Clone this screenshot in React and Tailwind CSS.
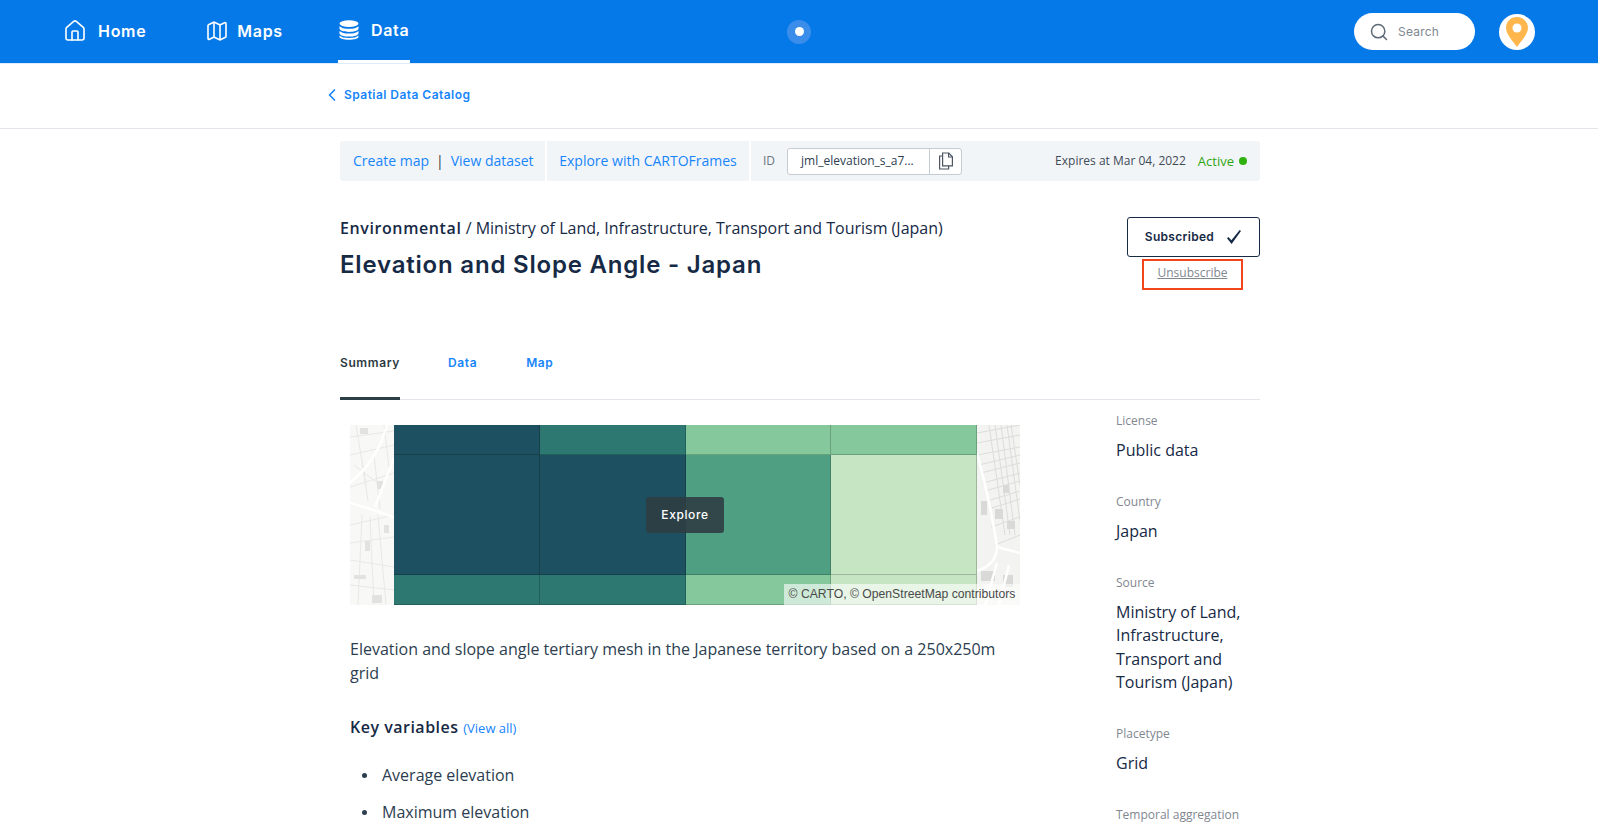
import React from 'react';
import { House, Map as MapIcon, Search, ChevronLeft } from 'lucide-react';

const heading = "font-['Inter',sans-serif]";

const DatabaseIcon = () => (
  <svg width="20" height="20" viewBox="0 0 20 20" fill="#fff">
    <ellipse cx="10" cy="3.6" rx="9.5" ry="3.4" />
    <path d="M.5 6.2c1.6 1.7 5 2.6 9.5 2.6s7.9-.9 9.5-2.6v2.3c0 1.9-4.2 3.4-9.5 3.4S.5 10.4.5 8.5z" />
    <path d="M.5 11c1.6 1.7 5 2.6 9.5 2.6s7.9-.9 9.5-2.6v2.2c0 1.9-4.2 3.4-9.5 3.4S.5 15.100.5 13.200z" />
    <path d="M.5 15.500c1.600 1.700 5 2.500 9.500 2.500s7.900-.8 9.500-2.500v1.200c0 1.800-4.200 3-9.500 3s-9.500-1.200-9.500-3z" />
  </svg>
);

const PinIcon = () => (
  <svg width="24" height="32" viewBox="0 0 24 32">
    <path d="M12 1C5.800 1 1 5.800 1 11.800c0 6.500 7 13.700 11 19.200 4-5.500 11-12.700 11-19.200C23 5.800 18.200 1 12 1z" fill="#ffb74d" />
    <circle cx="12" cy="12" r="4.500" fill="#fff" />
  </svg>
);

const CopyIcon = () => (
  <svg width="16" height="18" viewBox="0 0 16 18" fill="none" stroke="#4b5563" strokeWidth="1.200">
    <path d="M4.600 1h6.200l3.600 3.800v9H4.600z" />
    <path d="M10.600 1v4h3.800" />
    <path d="M4.600 4H1.600v13h9v-3.200" />
  </svg>
);

const CheckIcon = () => (
  <svg width="16" height="16" viewBox="0 0 16 16" fill="#162945">
    <path d="M1 9.200l1.400-1.300 3 3.300L13.700 1 15 1.900 5.600 15z" />
  </svg>
);

const StreetsLeft = () => (
  <svg width="44" height="180" viewBox="0 0 44 180" className="block shrink-0">
    <rect width="44" height="180" fill="#f8f8f6" />
    <g fill="none" stroke="#e8e8e6" strokeWidth="1">
      <path d="M0 12L44 6M0 30L44 20M6 0L16 60M0 62L44 48M12 36L18 76M24 30L30 84M0 100L44 90M0 118L44 112M12 90L8 180M0 135L44 142M28 90L36 180M0 160L44 165M34 0L40 50M20 92L24 180M4 40L30 60" />
    </g>
    <g fill="#e2e2e0">
      <rect x="10" y="3" width="8" height="6" />
      <rect x="27" y="56" width="6" height="8" />
      <rect x="34" y="100" width="5" height="8" />
      <rect x="15" y="116" width="5" height="10" />
      <rect x="4" y="150" width="12" height="4" />
      <rect x="22" y="170" width="10" height="8" />
    </g>
    <g fill="none" stroke="#fff" strokeWidth="2.500">
      <path d="M37 0C32 16 26 36 0 58" />
      <path d="M0 78L14 82L44 92" />
      <path d="M44 33L25 82" />
    </g>
  </svg>
);

const StreetsRight = () => (
  <svg width="43" height="180" viewBox="0 0 43 180" className="block shrink-0">
    <rect width="43" height="180" fill="#f3f3f1" />
    <g fill="none" stroke="#dcdcda" strokeWidth="1">
      <path d="M0 8L43 0M0 18L43 10M0 30L43 22M2 40L43 30M4 48L43 38M6 58L43 48M8 66L43 56M10 76L43 66M12 84L43 74M14 102L43 92M18 120L43 110M12 0L28 110M18 0L33 110M24 0L38 110M30 0L43 96M34 0L43 60" />
    </g>
    <g fill="#d9d9d7">
      <rect x="4" y="76" width="6" height="14" />
      <rect x="26" y="60" width="6" height="8" />
      <rect x="18" y="84" width="8" height="10" />
      <rect x="30" y="96" width="8" height="8" />
      <rect x="4" y="146" width="14" height="10" />
      <rect x="26" y="150" width="10" height="12" />
    </g>
    <g fill="none" stroke="#fff" strokeWidth="2.500">
      <path d="M0 28C6 50 14 80 20 122C20 134 12 142 0 146" />
      <path d="M20 122L43 128" />
      <path d="M20 138L8 180M32 140L22 180" />
    </g>
  </svg>
);

const mapCells = [
  'bg-[#1d5060]', 'bg-[#2e7872]', 'bg-[#85c89b]', 'bg-[#85c89b]',
  'bg-[#1d5060]', 'bg-[#1d5060]', 'bg-[#4fa083]', 'bg-[#c6e5c3]',
  'bg-[#2e7872]', 'bg-[#2e7872]', 'bg-[#85c89b]', 'bg-[#c6e5c3]',
];

const details = [
  { label: 'License', value: ['Public data'] },
  { label: 'Country', value: ['Japan'] },
  { label: 'Source', value: ['Ministry of Land,', 'Infrastructure,', 'Transport and', 'Tourism (Japan)'] },
  { label: 'Placetype', value: ['Grid'] },
];

export default function App() {
  return (
    <div className="h-screen overflow-hidden bg-white text-[#162945] font-['Open_Sans',sans-serif]">
      {/* Top bar */}
      <header className="flex h-[64px] items-stretch bg-[#0679e8] border-b border-[#dcecfb] text-white">
        <nav className={`flex flex-1 items-stretch pl-[63px] text-[16px] font-semibold tracking-[0.7px] ${heading}`}>
          <a className="flex items-center gap-[11px] mr-[59px] pb-[2px]">
            <House size={24} strokeWidth={1.600} />
            <span>Home</span>
          </a>
          <a className="flex items-center gap-[8px] mr-[55px] pb-[2px]">
            <MapIcon size={24} strokeWidth={1.600} />
            <span>Maps</span>
          </a>
          <a className="flex items-center gap-[12px] border-b-[3px] border-white px-[1px]">
            <DatabaseIcon />
            <span>Data</span>
          </a>
        </nav>
        <div className="flex items-center">
          <span className="flex h-6 w-6 items-center justify-center rounded-full bg-[#3a8eea]">
            <span className="h-[9px] w-[9px] rounded-full bg-white" />
          </span>
        </div>
        <div className="flex flex-1 items-center justify-end gap-6 pr-[63px]">
          <div className="flex h-[37px] w-[121px] items-center gap-[9px] rounded-full bg-white pl-[15px]">
            <Search size={20} strokeWidth={1.800} color="#5f6b76" />
            <span className={`text-[12px] tracking-[0.2px] text-[#7f8790] ${heading}`}>Search</span>
          </div>
          <div className="flex h-9 w-9 items-center justify-center rounded-full bg-white">
            <PinIcon />
          </div>
        </div>
      </header>

      {/* Breadcrumb */}
      <div className="flex h-[65px] items-center border-b border-[#e2e6ea] pl-[322px] pb-[2px]">
        <a className={`flex items-center gap-[2px] text-[12px] font-semibold tracking-[0.45px] text-[#1785fb] ${heading}`}>
          <ChevronLeft size={20} strokeWidth={2} />
          <span>Spatial Data Catalog</span>
        </a>
      </div>

      <main className="ml-[340px] w-[920px]">
        {/* Toolbar */}
        <div className="mt-3 flex h-10 gap-[2px] overflow-hidden rounded-[3px] text-[14px] leading-[20px]">
          <div className="flex w-[205px] items-center bg-[#f2f5f8] pl-[13px] text-[#1785fb]">
            <a>Create map</a>
            <span className="mx-[7px] text-[#2c3a42]">|</span>
            <a>View dataset</a>
          </div>
          <div className="flex w-[202px] items-center justify-center bg-[#f2f5f8] text-[#1785fb]">
            <a>Explore with CARTOFrames</a>
          </div>
          <div className="flex flex-1 items-center bg-[#f2f5f8] pl-3 pr-[13px]">
            <span className="text-[12px] text-[#6b7680]">ID</span>
            <div className="ml-[12px] flex h-[27px] w-[175px] items-center rounded-[3px] border border-[#c5ccd3] bg-white text-[12px] text-[#2c3e50]">
              <span className="flex-1 pl-[13px]">jml_elevation_s_a7...</span>
              <span className="flex h-full w-[32px] items-center justify-center border-l border-[#c5ccd3]">
                <CopyIcon />
              </span>
            </div>
            <span className="ml-auto text-[12px] text-[#3d4b57]">Expires at Mar 04, 2022</span>
            <span className="ml-[12px] text-[13px] text-[#2fa50f]">Active</span>
            <span className="ml-[5px] h-2 w-2 rounded-full bg-[#2fb20f]" />
          </div>
        </div>

        {/* Title block */}
        <div className="mt-[36px] flex h-[136px] items-start justify-between">
          <div>
            <p className="text-[16px] leading-[22px]">
              <strong className="font-semibold tracking-[0.6px]">Environmental</strong> / Ministry of Land, Infrastructure, Transport and Tourism (Japan)
            </p>
            <h1 className={`mt-[10px] text-[24px] leading-[32px] font-semibold tracking-[0.8px] ${heading}`}>
              Elevation and Slope Angle - Japan
            </h1>
          </div>
          <div className="flex w-[133px] flex-col items-center">
            <button className={`flex h-10 w-full items-center justify-center gap-[12px] rounded-[3px] border border-[#162945] text-[12px] font-semibold tracking-[0.3px] ${heading}`}>
              Subscribed
              <CheckIcon />
            </button>
            <div className="mt-[2px] mr-[2px] flex h-[31px] w-[101px] items-center justify-center border-2 border-[#f2451c] pb-[3px]">
              <a className="text-[12px] text-[#7f8790] underline">Unsubscribe</a>
            </div>
          </div>
        </div>

        {/* Tabs */}
        <div className={`flex h-[47px] border-b border-[#e2e6ea] text-[12px] font-semibold tracking-[0.6px] ${heading}`}>
          <a className="h-[43px] w-[60px] border-b-[3px] border-[#2c3e46] text-[#2c3a42] box-content -mb-[1px] pt-[1px]">Summary</a>
          <a className="ml-[48px] pt-[1px] text-[#1785fb]">Data</a>
          <a className="ml-[49px] pt-[1px] text-[#1785fb]">Map</a>
        </div>

        <div className="flex">
          {/* Left column */}
          <div className="w-[776px] pl-[10px]">
            <div className="relative mt-[25px] flex h-[180px] w-[670px]">
              <StreetsLeft />
              <div className="grid w-[583px] grid-cols-4 grid-rows-[30px_120px_30px]">
                {mapCells.map((cell, i) => (
                  <div key={i} className={`${cell} border-r border-b border-black/20`} />
                ))}
              </div>
              <StreetsRight />
              <button className={`absolute left-[296px] top-[72px] h-9 w-[78px] rounded-[3px] bg-[#2f3d42]/90 text-[12px] font-medium tracking-[0.6px] text-white ${heading}`}>
                Explore
              </button>
              <div className="absolute bottom-0 right-0 flex h-[21px] w-[236px] items-center justify-center bg-white/60 font-['Liberation_Sans',sans-serif] text-[12.200px] text-[#4a4a4a]">
                © CARTO, © OpenStreetMap contributors
              </div>
            </div>

            <p className="mt-[32px] w-[670px] text-[16px] leading-[24px] text-[#2c3e50]">
              Elevation and slope angle tertiary mesh in the Japanese territory based on a 250x250m grid
            </p>

            <h3 className="mt-[30px] text-[16px] leading-[24px] font-semibold tracking-[0.5px]">
              Key variables <a className="text-[13px] font-medium tracking-normal text-[#1785fb]">(View all)</a>
            </h3>

            <ul className="mt-[23px] pl-[12px] text-[16px] leading-[24px] text-[#2c3e50]">
              <li className="flex items-center gap-[15px]">
                <span className="h-[5px] w-[5px] rounded-full bg-[#2c3e50]" />
                Average elevation
              </li>
              <li className="mt-[13px] flex items-center gap-[15px]">
                <span className="h-[5px] w-[5px] rounded-full bg-[#2c3e50]" />
                Maximum elevation
              </li>
            </ul>
          </div>

          {/* Right column */}
          <aside className="pt-[12px]">
            {details.map((item) => (
              <div key={item.label} className="mb-[30.250px] last:mb-[27px]">
                <div className="text-[12px] leading-[18px] text-[#7f8790]">{item.label}</div>
                <div className="mt-[9px] text-[16px] leading-[23.500px]">
                  {item.value.map((line) => (
                    <div key={line}>{line}</div>
                  ))}
                </div>
              </div>
            ))}
            <div className="text-[12px] leading-[18px] text-[#7f8790]">Temporal aggregation</div>
          </aside>
        </div>
      </main>
    </div>
  );
}
